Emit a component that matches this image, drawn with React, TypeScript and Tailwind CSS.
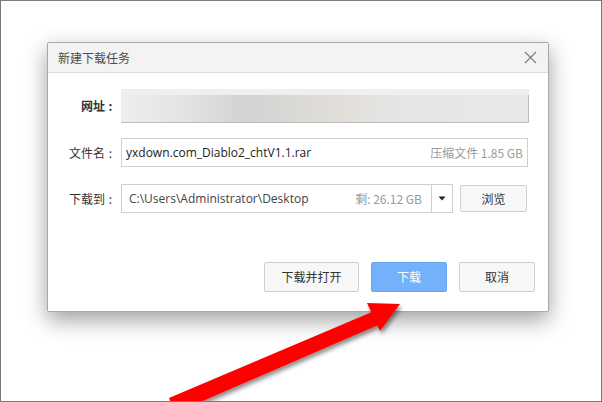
import React from "react";

const cjk = { fontFamily: '"Microsoft YaHei", "Noto Sans CJK SC", "Noto Sans", sans-serif' };
const latin = { fontFamily: '"Segoe UI", "Open Sans", "Noto Sans CJK SC", sans-serif' };

function Label({ children, bold }: { children: React.ReactNode; bold?: boolean }) {
  return (
    <div
      className={`w-[68px] shrink-0 flex justify-end items-center text-[12px] text-[#333] ${bold ? "font-bold" : ""}`}
      style={cjk}
    >
      <span>{children}</span>
      <span className="inline-block w-[11px] text-center">:</span>
    </div>
  );
}

export default function App() {
  return (
    <div className="relative w-[602px] h-[402px] bg-white border border-[#7a7a7a] overflow-hidden box-border">
      <div className="pt-[41px] pl-[46px]">
        <div className="w-[502px] h-[270px] bg-white border border-[#a8a8a8] rounded-[2px] shadow-[0_8px_22px_rgba(0,0,0,0.38)] flex flex-col">
          {/* Title bar */}
          <div className="h-[30px] bg-[#f3f3f3] border-b border-[#dcdcdc] flex items-center justify-between pl-[10px] pr-[11px]">
            <span className="text-[12px] text-[#4a4a4a]" style={cjk}>新建下载任务</span>
            <svg width="13" height="13" viewBox="0 0 13 13">
              <path d="M1 1 L12 12 M12 1 L1 12" stroke="#7d7d7d" strokeWidth="1.2" fill="none" />
            </svg>
          </div>

          {/* Body */}
          <div className="flex flex-col pt-[16px]">
            {/* URL row */}
            <div className="flex items-center gap-[5px]">
              <Label bold>网址</Label>
              <div className="w-[408px] h-[34px] flex flex-col">
                <div className="h-[6px] bg-[#efefef]" />
                <div className="flex-1 border-b border-r border-[#bdbdbd] bg-[linear-gradient(90deg,#eeeeec_0%,#e4e4e2_15%,#d2d3d4_30%,#dcdad6_45%,#e2dfdb_55%,#e6e6e5_70%,#e8e8e8_100%)]" />
              </div>
            </div>

            {/* Filename row */}
            <div className="flex items-center gap-[5px] mt-[15px]">
              <Label>文件名</Label>
              <div className="w-[407px] h-[29px] border border-[#cfcfcf] flex items-center justify-between pl-[4px] pr-[4px]">
                <span className="text-[12px] text-[#222]" style={latin}>yxdown.com_Diablo2_chtV1.1.rar</span>
                <span className="text-[12px] text-[#9a9a9a]" style={cjk}>压缩文件 1.85 GB</span>
              </div>
            </div>

            {/* Destination row */}
            <div className="flex items-center gap-[5px] mt-[17px]">
              <Label>下载到</Label>
              <div className="w-[332px] h-[29px] border border-[#cfcfcf] flex items-center">
                <div className="flex-1 flex items-center justify-between pl-[7px] pr-[9px]">
                  <span className="text-[12px] text-[#444]" style={latin}>C:\Users\Administrator\Desktop</span>
                  <span className="text-[12px] text-[#9a9a9a]" style={cjk}>剩: 26.12 GB</span>
                </div>
                <div className="w-[21px] h-full border-l border-[#cfcfcf] flex items-center justify-center">
                  <svg width="8" height="5" viewBox="0 0 8 5">
                    <path d="M0.5 0.5 L7.5 0.5 L4 4.5 Z" fill="#222" />
                  </svg>
                </div>
              </div>
              <div className="ml-[2px] w-[67px] h-[27px] border border-[#cfcfcf] bg-[#f7f7f7] rounded-[2px] flex items-center justify-center text-[12px] text-[#333]" style={cjk}>
                浏览
              </div>
            </div>
          </div>

          {/* Buttons */}
          <div className="mt-auto mb-[19px] flex justify-end gap-[12px] pr-[13px]">
            <div className="w-[95px] h-[30px] border border-[#cfcfcf] bg-[#f7f7f7] rounded-[2px] flex items-center justify-center text-[12px] text-[#333]" style={cjk}>
              下载并打开
            </div>
            <div className="w-[76px] h-[30px] border border-[#6aa9f2] bg-[#73b2fa] rounded-[2px] flex items-center justify-center text-[12px] text-white" style={cjk}>
              下载
            </div>
            <div className="w-[76px] h-[30px] border border-[#cfcfcf] bg-[#f7f7f7] rounded-[2px] flex items-center justify-center text-[12px] text-[#333]" style={cjk}>
              取消
            </div>
          </div>
        </div>
      </div>

      {/* Red arrow overlay */}
      <svg className="absolute left-0 top-0 pointer-events-none" width="602" height="402" viewBox="0 0 602 402">
        <defs>
          <filter id="sh" x="-20%" y="-20%" width="140%" height="140%">
            <feDropShadow dx="2" dy="3" stdDeviation="2" floodColor="#000" floodOpacity="0.45" />
          </filter>
        </defs>
        <g filter="url(#sh)" fill="#ff0000">
          <polygon points="168,397 378,308 384,321 174,412" />
          <polygon points="366,302 399,303 379,330" />
        </g>
      </svg>
    </div>
  );
}
